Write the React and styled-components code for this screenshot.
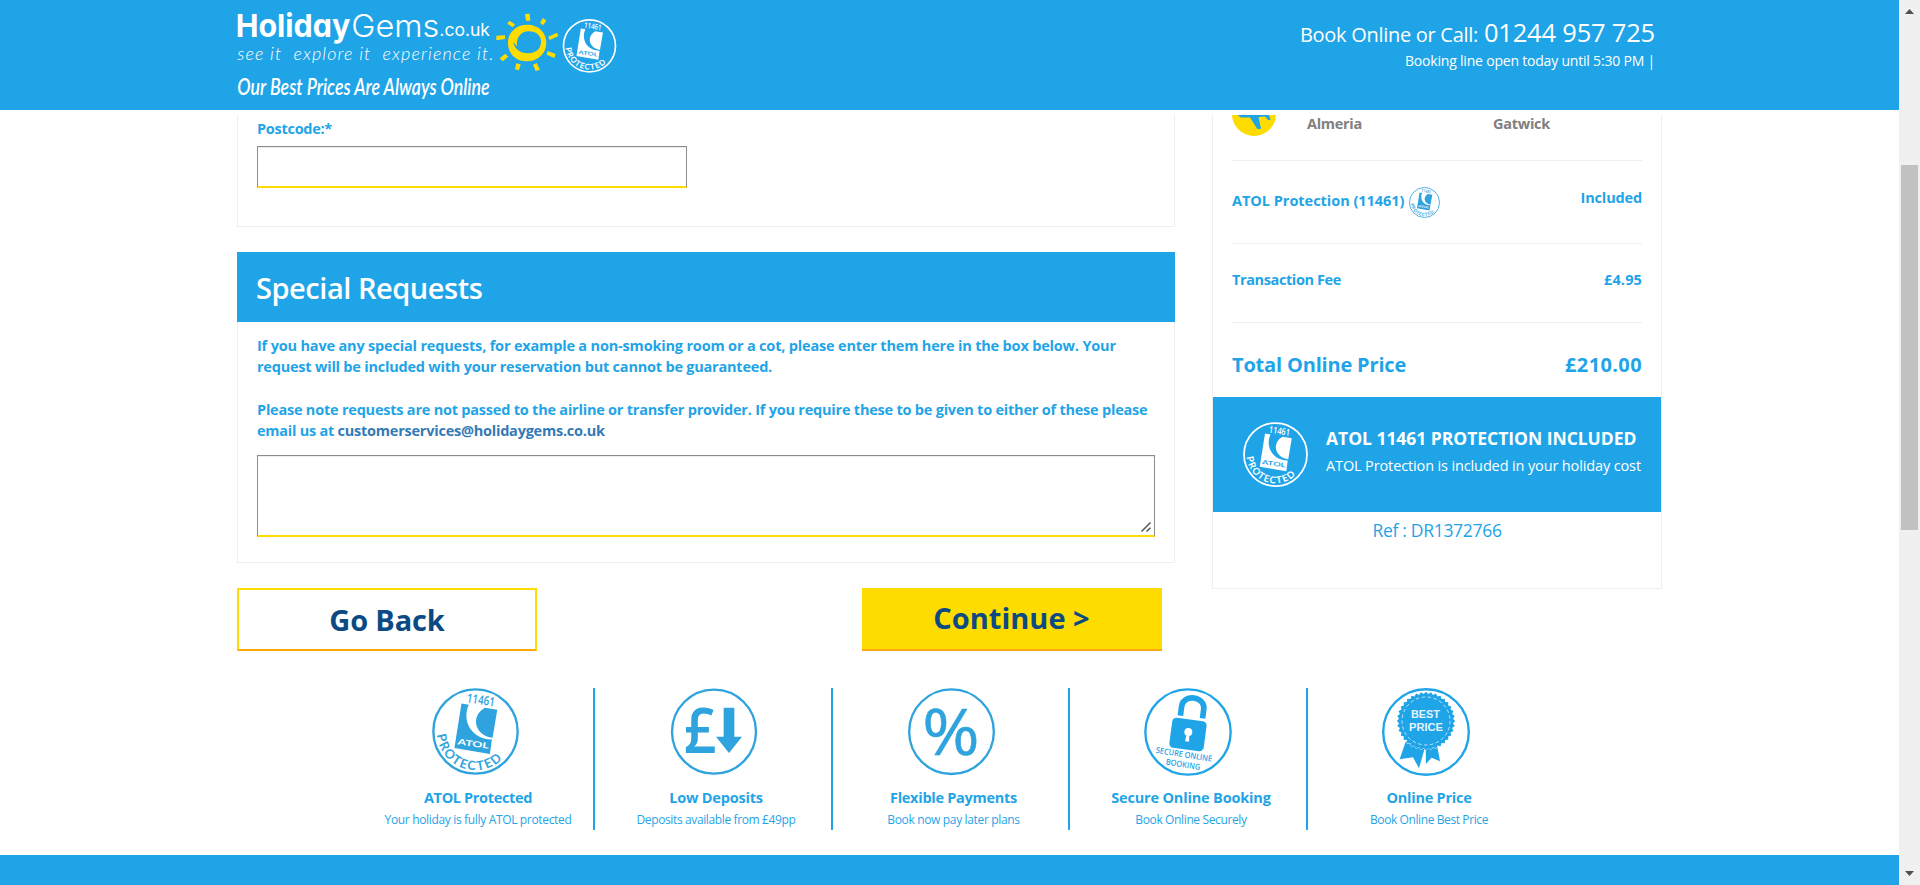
import React from "react";
import styled, { createGlobalStyle } from "styled-components";

const BLUE = "#1fa4e8";
const ICON_BLUE = "#2fa3dd";
const YELLOW = "#ffdc00";
const NAVY = "#0b4a82";

const Global = createGlobalStyle`
  *, *::before, *::after { box-sizing: border-box; }
  html, body { margin: 0; padding: 0; height: 885px; overflow: hidden; background: #fff; }
  body { font-family: "Open Sans", "Noto Sans", sans-serif; color: ${BLUE}; }
  svg { display: block; overflow: visible; }
`;

const Screen = styled.div`
  display: flex;
  width: 1920px;
  height: 885px;
  overflow: hidden;
`;
const Page = styled.div`
  flex: 1;
  display: flex;
  flex-direction: column;
`;

const Text = styled.span`
  display: block;
  white-space: pre;
  font-size: ${(p) => p.$size || 14.5}px;
  line-height: ${(p) => p.$line || 20}px;
  font-weight: ${(p) => p.$weight || 700};
  letter-spacing: ${(p) => p.$track || 0}px;
  color: ${(p) => p.$color || "inherit"};
`;

const Header = styled.header`
  height: 110px;
  flex: none;
  background: ${BLUE};
  color: #fff;
  display: flex;
  justify-content: space-between;
  padding: 0 244px 0 237px;
`;
const Contact = styled.div`
  display: flex;
  flex-direction: column;
  align-items: flex-end;
  gap: 1px;
  padding-top: 14px;
`;
const CallLine = styled.div`
  display: flex;
  align-items: baseline;
  gap: 6px;
  height: 36px;
`;

const Columns = styled.div`
  display: flex;
  align-items: flex-start;
  gap: 37px;
  padding: 5px 0 0 237px;
`;
const FormColumn = styled.main`
  width: 938px;
`;
const AddressPanel = styled.section`
  height: 112px;
  border: 1px solid #eee;
  border-top: 0;
  padding: 4px 19px 0;
`;
const fieldLook = `
  display: block;
  border: 1px solid #8c8c8c;
  border-bottom: 2px solid ${YELLOW};
  background: #fff;
  box-shadow: inset 0 1px 1px rgba(0, 0, 0, 0.075);
  outline: 0;
`;
const PostcodeInput = styled.input`
  ${fieldLook}
  width: 430px;
  height: 42px;
  margin-top: 7px;
`;
const RequestsPanel = styled.section`
  margin-top: 25px;
`;
const PanelTitle = styled.h2`
  margin: 0;
  height: 70px;
  padding: 1px 0 0 19px;
  background: ${BLUE};
  color: #fff;
  display: flex;
`;
const PanelBody = styled.div`
  height: 241px;
  border: 1px solid #eee;
  border-top: 0;
  padding: 12.6px 19px 0;
`;
const Copy = styled.div`
  display: flex;
  flex-direction: column;
  height: 107.4px;
`;
const CopyLine = styled.div`
  display: flex;
  height: 21.5px;
`;
const RequestsField = styled.div`
  position: relative;
  width: 898px;
  margin-top: 13px;
`;
const RequestsBox = styled.textarea`
  ${fieldLook}
  width: 100%;
  height: 82px;
  resize: none;
`;
const ResizeGrip = styled.svg`
  position: absolute;
  right: 4px;
  bottom: 5px;
`;
const Actions = styled.div`
  display: flex;
  justify-content: space-between;
  width: 925px;
  margin-top: 25px;
`;
const ActionButton = styled.button`
  width: 300px;
  height: 63px;
  padding: ${(p) => (p.$solid ? "0 1px 2px 0" : "0")};
  border: ${(p) => (p.$solid ? 0 : 2)}px solid ${YELLOW};
  border-bottom: 2px solid #f9a80d;
  background: ${(p) => (p.$solid ? YELLOW : "#fff")};
  color: ${NAVY};
  font-family: inherit;
  display: flex;
  align-items: center;
  justify-content: center;
`;

const Summary = styled.aside`
  width: 450px;
  height: 474px;
  border: 1px solid #eee;
  border-top: 0;
`;
const Row = styled.div`
  display: flex;
  align-items: flex-start;
  justify-content: space-between;
  margin: 0 19px;
  height: ${(p) => p.$height}px;
  padding-top: ${(p) => p.$top || 0}px;
  border-bottom: ${(p) => (p.$last ? 0 : 1)}px solid #eee;
`;
const FlightRow = styled(Row)`
  justify-content: flex-start;
`;
const Place = styled.div`
  width: ${(p) => p.$width}px;
  margin-left: ${(p) => p.$gap || 0}px;
`;
const ProtectionLabel = styled.div`
  display: flex;
  gap: 5px;
  align-items: flex-start;
  & > span { margin-top: 3px; }
  & > svg { margin-top: -1px; }
`;
const Band = styled.div`
  height: 115px;
  background: ${BLUE};
  color: #fff;
  display: flex;
  gap: 18px;
  padding: 25px 0 0 30px;
`;
const BandCopy = styled.div`
  display: flex;
  flex-direction: column;
  align-items: flex-start;
  gap: 5px;
  padding-top: 4px;
`;
const Reference = styled.div`
  display: flex;
  justify-content: center;
  padding-top: 5px;
`;

const Features = styled.section`
  display: flex;
  margin: 37px 0 0 357px;
`;
const Feature = styled.div`
  width: ${(p) => p.$width}px;
  height: 142px;
  display: flex;
  flex-direction: column;
  align-items: center;
  border-right: ${(p) => (p.$last ? 0 : 2)}px solid ${BLUE};
`;
const FeatureIcon = styled.div`
  height: 88px;
  margin-bottom: 12px;
  padding-left: ${(p) => p.$shift || 0}px;
`;
const FeatureCopy = styled.div`
  display: flex;
  flex-direction: column;
  align-items: center;
  gap: 3px;
  padding-left: 6px;
`;
const Footer = styled.footer`
  margin-top: 25px;
  height: 30px;
  background: ${BLUE};
`;

const Scrollbar = styled.div`
  width: 21px;
  background: #f0f0f0;
  display: flex;
  flex-direction: column;
  align-items: center;
  justify-content: space-between;
  padding: 9px 0;
`;
const Thumb = styled.div`
  width: 17px;
  height: 365px;
  margin-bottom: 190px;
  background: #c1c1c1;
`;

function AtolBadge({ size, color, paper, stroke = 7 }) {
  const id = "ring" + size;
  return (
    <svg width={size} height={size} viewBox="185 55 260 260">
      <circle cx="315" cy="185" r="126" fill="none" stroke={color} strokeWidth={stroke} />
      <path d="M273 101 L295 105 C274 150 300 208 364 209 L358 252 L252 234 Z" fill={color} />
      <path d="M343 114 L380 120 L366 204 C310 196 300 138 343 114 Z" fill={color} />
      <text x="331" y="104" transform="rotate(9 331 91)" textAnchor="middle" fontFamily="Open Sans" fontWeight="600" fontSize="38" textLength="84" lengthAdjust="spacingAndGlyphs" fill={color}>11461</text>
      <text x="308" y="230" transform="rotate(8 308 222)" textAnchor="middle" fontFamily="Lato" fontWeight="700" fontSize="24" textLength="94" lengthAdjust="spacingAndGlyphs" fill={paper}>ATOL</text>
      <path id={id} d="M200 195 A115 115 0 0 0 418 236" fill="none" />
      <text fontFamily="Lato" fontWeight="700" fontSize="38" letterSpacing="5" fill={color}>
        <textPath href={"#" + id}>PROTECTED</textPath>
      </text>
    </svg>
  );
}

function Logo() {
  return (
    <svg width="390" height="110" viewBox="51 0 1170 330">
      <g fill="#fff">
        <text x="47" y="110" fontFamily="Inter" fontWeight="700" fontSize="95" textLength="344" lengthAdjust="spacingAndGlyphs" style={{ fontFeatureSettings: '"cv11"' }}>Holiday</text>
        <text x="394" y="110" fontFamily="Inter" fontWeight="300" fontSize="94" textLength="264" lengthAdjust="spacingAndGlyphs">Gems</text>
        <text x="658" y="109" fontFamily="Inter" fontWeight="400" fontSize="50" textLength="152" lengthAdjust="spacingAndGlyphs">.co.uk</text>
        <text x="52" y="181" fontFamily="Lato" fontStyle="italic" fontWeight="300" fontSize="54" textLength="768" lengthAdjust="spacing" style={{ whiteSpace: "pre" }}>see it  explore it  experience it.</text>
        <text x="52" y="285" fontFamily="Lato" fontStyle="italic" fontWeight="600" fontSize="70" textLength="757" lengthAdjust="spacingAndGlyphs">Our Best Prices Are Always Online</text>
      </g>
      <g fill={YELLOW}>
        <path fillRule="evenodd" d="M922 74 C956 74 979 98 979 128 C979 160 954 184 920 184 C886 184 864 160 864 128 C864 97 888 74 922 74 Z M891 139 L880 126 C882 146 902 161 925 160 C949 159 963 146 963 124 C963 106 947 94 927 94 C903 94 888 112 891 139 Z" />
        <path d="M915 42 L929 41 L931 62 L918 62 Z M969 54 L979 62 L969 76 L960 68 Z M985 110 L1011 98 L1015 108 L989 120 Z M983 153 L1007 162 L1003 174 L980 164 Z M939 194 L950 189 L960 209 L947 213 Z M889 190 L902 193 L897 211 L885 208 Z M856 161 L865 170 L848 184 L839 175 Z M829 107 L855 106 L855 117 L829 121 Z M868 62 L885 73 L878 82 L862 71 Z" />
      </g>
      <svg x="1028" y="56" width="161" height="163" viewBox="0 0 54 54">
        <AtolBadge size={54} color="#fff" paper={BLUE} stroke={8} />
      </svg>
    </svg>
  );
}

function PlaneIcon() {
  return (
    <svg width="44" height="21" viewBox="0 23 44 21" style={{ overflow: "hidden" }}>
      <circle cx="22" cy="22" r="22" fill={YELLOW} />
      <path d="M5.500 23 H37 L38.500 28 H36 L33 24.500 L26.500 25 L29 36.700 L25.500 37.200 L18 25.500 L9 25.500 Z" fill={BLUE} />
    </svg>
  );
}

function DepositIcon() {
  return (
    <svg width="86" height="87" viewBox="903 54 258 261">
      <circle cx="1032" cy="185" r="126" fill="none" stroke={ICON_BLUE} strokeWidth="7" />
      <text x="941" y="250" fontFamily="Open Sans" fontWeight="600" fontSize="188" textLength="98" lengthAdjust="spacingAndGlyphs" fill={ICON_BLUE}>£</text>
      <path d="M1061 113 H1093 V200 H1116 L1077 249 L1038 200 H1061 Z" fill={ICON_BLUE} />
    </svg>
  );
}

function PercentIcon() {
  return (
    <svg width="87" height="87" viewBox="174 54 261 261">
      <circle cx="304.500" cy="185" r="127" fill="none" stroke={ICON_BLUE} strokeWidth="7" />
      <text x="217" y="254" fontFamily="Open Sans" fontWeight="400" fontSize="194" textLength="172" lengthAdjust="spacingAndGlyphs" fill={ICON_BLUE} stroke={ICON_BLUE} strokeWidth="1.500">%</text>
    </svg>
  );
}

function SecureIcon() {
  return (
    <svg width="88" height="88" viewBox="882 54 264 264">
      <circle cx="1014" cy="186" r="128" fill="none" stroke={BLUE} strokeWidth="7" />
      <g transform="rotate(7.500 1014 193)">
        <rect x="962" y="148" width="104" height="91" rx="13" fill={BLUE} />
        <path d="M988 140 V112 C988 73 1055 73 1055 112 V140" transform="translate(-4 0)" fill="none" stroke={BLUE} strokeWidth="17" />
        <circle cx="1014" cy="186" r="12" fill="#fff" />
        <path d="M1010 190 H1018 L1020 215 H1008 Z" fill="#fff" />
      </g>
      <g fill={BLUE} fontFamily="Open Sans" fontWeight="600" textAnchor="middle">
        <text x="1002" y="262" fontSize="25" transform="rotate(9 1002 254)" textLength="170" lengthAdjust="spacingAndGlyphs">SECURE ONLINE</text>
        <text x="999" y="292" fontSize="25" transform="rotate(9 999 284)" textLength="104" lengthAdjust="spacingAndGlyphs">BOOKING</text>
      </g>
    </svg>
  );
}

const scallops = Array.from({ length: 72 }, (_, i) => {
  const r = i % 2 ? 27 : 29.2;
  const a = (i * Math.PI) / 36;
  return `${(44 + r * Math.cos(a)).toFixed(2)},${(33 + r * Math.sin(a)).toFixed(2)}`;
}).join(" ");

function BestPriceIcon() {
  return (
    <svg width="88" height="88" viewBox="0 0 88 88">
      <circle cx="44" cy="44" r="42.800" fill="none" stroke={BLUE} strokeWidth="2.400" />
      <path d="M24 53 L17.600 71.300 L31 69.300 L37 80.300 L42.500 61 Z M43.800 61 L43.800 76 L49.600 69.700 L58 73.300 L55 57 Z" fill={BLUE} />
      <polygon points={scallops} fill={BLUE} stroke="#fff" strokeWidth="0.800" paintOrder="stroke" />
      <circle cx="44" cy="33" r="24" fill="none" stroke="#fff" strokeWidth="0.800" strokeDasharray="3.500 2.500" opacity="0.850" />
      <g fill="#e4f4fd" fontFamily="Liberation Sans" fontWeight="700" fontSize="11.500" textAnchor="middle">
        <text x="43.500" y="29.700" textLength="29" lengthAdjust="spacingAndGlyphs">BEST</text>
        <text x="44" y="43" textLength="34" lengthAdjust="spacingAndGlyphs">PRICE</text>
      </g>
    </svg>
  );
}

const features = [
  { icon: <AtolBadge size={87} color={ICON_BLUE} paper="#fff" />, width: 238, title: "ATOL Protected", track: -0.35, sub: "Your holiday is fully ATOL protected", subTrack: -0.34 },
  { icon: <DepositIcon />, shift: 2, width: 238, title: "Low Deposits", track: -0.2, sub: "Deposits available from £49pp", subTrack: -0.37 },
  { icon: <PercentIcon />, shift: 1, width: 237, title: "Flexible Payments", track: -0.27, sub: "Book now pay later plans", subTrack: -0.34 },
  { icon: <SecureIcon />, width: 238, title: "Secure Online Booking", track: -0.17, sub: "Book Online Securely", subTrack: -0.37 },
  { icon: <BestPriceIcon />, width: 236, title: "Online Price", track: -0.24, sub: "Book Online Best Price", subTrack: -0.4 },
];

export default function App() {
  return (
    <>
      <Global />
      <Screen>
        <Page>
          <Header>
            <Logo />
            <Contact>
              <CallLine>
                <Text $track={-0.29} $size={20} $line={36} $weight={400}>Book Online or Call:</Text>
                <Text $track={-0.2} $size={25.5} $line={36} $weight={400}>01244 957 725</Text>
              </CallLine>
              <Text $track={-0.2} $size={14} $weight={400}>Booking line open today until 5:30 PM |</Text>
            </Contact>
          </Header>
          <Columns>
            <FormColumn>
              <AddressPanel>
                <Text $track={-0.28}>Postcode:*</Text>
                <PostcodeInput />
              </AddressPanel>
              <RequestsPanel>
                <PanelTitle>
                  <Text $track={-0.46} $size={29} $line={70} $weight={600}>Special Requests</Text>
                </PanelTitle>
                <PanelBody>
                  <Copy>
                    <CopyLine><Text $track={-0.177} $line={21.5}>If you have any special requests, for example a non-smoking room or a cot, please enter them here in the box below. Your</Text></CopyLine>
                    <CopyLine><Text $track={-0.214} $line={21.5}>request will be included with your reservation but cannot be guaranteed.</Text></CopyLine>
                    <CopyLine />
                    <CopyLine><Text $track={-0.218} $line={21.5}>Please note requests are not passed to the airline or transfer provider. If you require these to be given to either of these please</Text></CopyLine>
                    <CopyLine>
                      <Text $track={-0.25} $line={21.5}>{"email us at "}</Text>
                      <Text $track={-0.23} $line={21.5} $color="#337ab7">customerservices@holidaygems.co.uk</Text>
                    </CopyLine>
                  </Copy>
                  <RequestsField>
                    <RequestsBox />
                    <ResizeGrip width="10" height="10">
                      <path d="M0.500 9.500 L9.500 0.500 M5.500 9.500 L9.500 5.800" stroke="#555" strokeWidth="1.500" fill="none" />
                    </ResizeGrip>
                  </RequestsField>
                </PanelBody>
              </RequestsPanel>
              <Actions>
                <ActionButton><Text $size={29} $line={40} $track={-0.15}>Go Back</Text></ActionButton>
                <ActionButton $solid><Text $size={29} $line={40}>Continue &gt;</Text></ActionButton>
              </Actions>
            </FormColumn>
            <Summary>
              <FlightRow $height={46}>
                <PlaneIcon />
                <Place $gap={31} $width={186}><Text $track={-0.29} $line={17} $color="#808080">Almeria</Text></Place>
                <Place $width={80}><Text $track={-0.26} $line={17} $color="#808080">Gatwick</Text></Place>
              </FlightRow>
              <Row $height={83} $top={27}>
                <ProtectionLabel>
                  <Text $track={-0.03}>ATOL Protection (11461)</Text>
                  <AtolBadge size={31} color={ICON_BLUE} paper="#fff" />
                </ProtectionLabel>
                <Text $track={-0.15}>Included</Text>
              </Row>
              <Row $height={79} $top={26}>
                <Text $track={-0.39}>Transaction Fee</Text>
                <Text $track={0.14}>£4.95</Text>
              </Row>
              <Row $height={74} $top={28} $last>
                <Text $track={-0.18} $size={20} $line={28}>Total Online Price</Text>
                <Text $track={0.38} $size={20} $line={28}>£210.00</Text>
              </Row>
              <Band>
                <AtolBadge size={65} color="#fff" paper={BLUE} />
                <BandCopy>
                  <Text $size={17.5} $line={24} $track={-0.03}>ATOL 11461 PROTECTION INCLUDED</Text>
                  <Text $track={-0.13} $size={14.5} $line={22} $weight={400}>ATOL Protection is included in your holiday cost</Text>
                </BandCopy>
              </Band>
              <Reference><Text $track={-0.3} $size={17.5} $line={26} $weight={400}>Ref : DR1372766</Text></Reference>
            </Summary>
          </Columns>
          <Features>
            {features.map((f, i) => (
              <Feature key={f.title} $width={f.width} $last={i === features.length - 1}>
                <FeatureIcon $shift={f.shift}>{f.icon}</FeatureIcon>
                <FeatureCopy>
                  <Text $track={f.track}>{f.title}</Text>
                  <Text $track={f.subTrack} $size={12} $line={18} $weight={400}>{f.sub}</Text>
                </FeatureCopy>
              </Feature>
            ))}
          </Features>
          <Footer />
        </Page>
        <Scrollbar>
          <svg width="9" height="5"><path d="M0 5 L4.500 0 L9 5 Z" fill="#505050" /></svg>
          <Thumb />
          <svg width="9" height="5"><path d="M0 0 L4.500 5 L9 0 Z" fill="#505050" /></svg>
        </Scrollbar>
      </Screen>
    </>
  );
}
